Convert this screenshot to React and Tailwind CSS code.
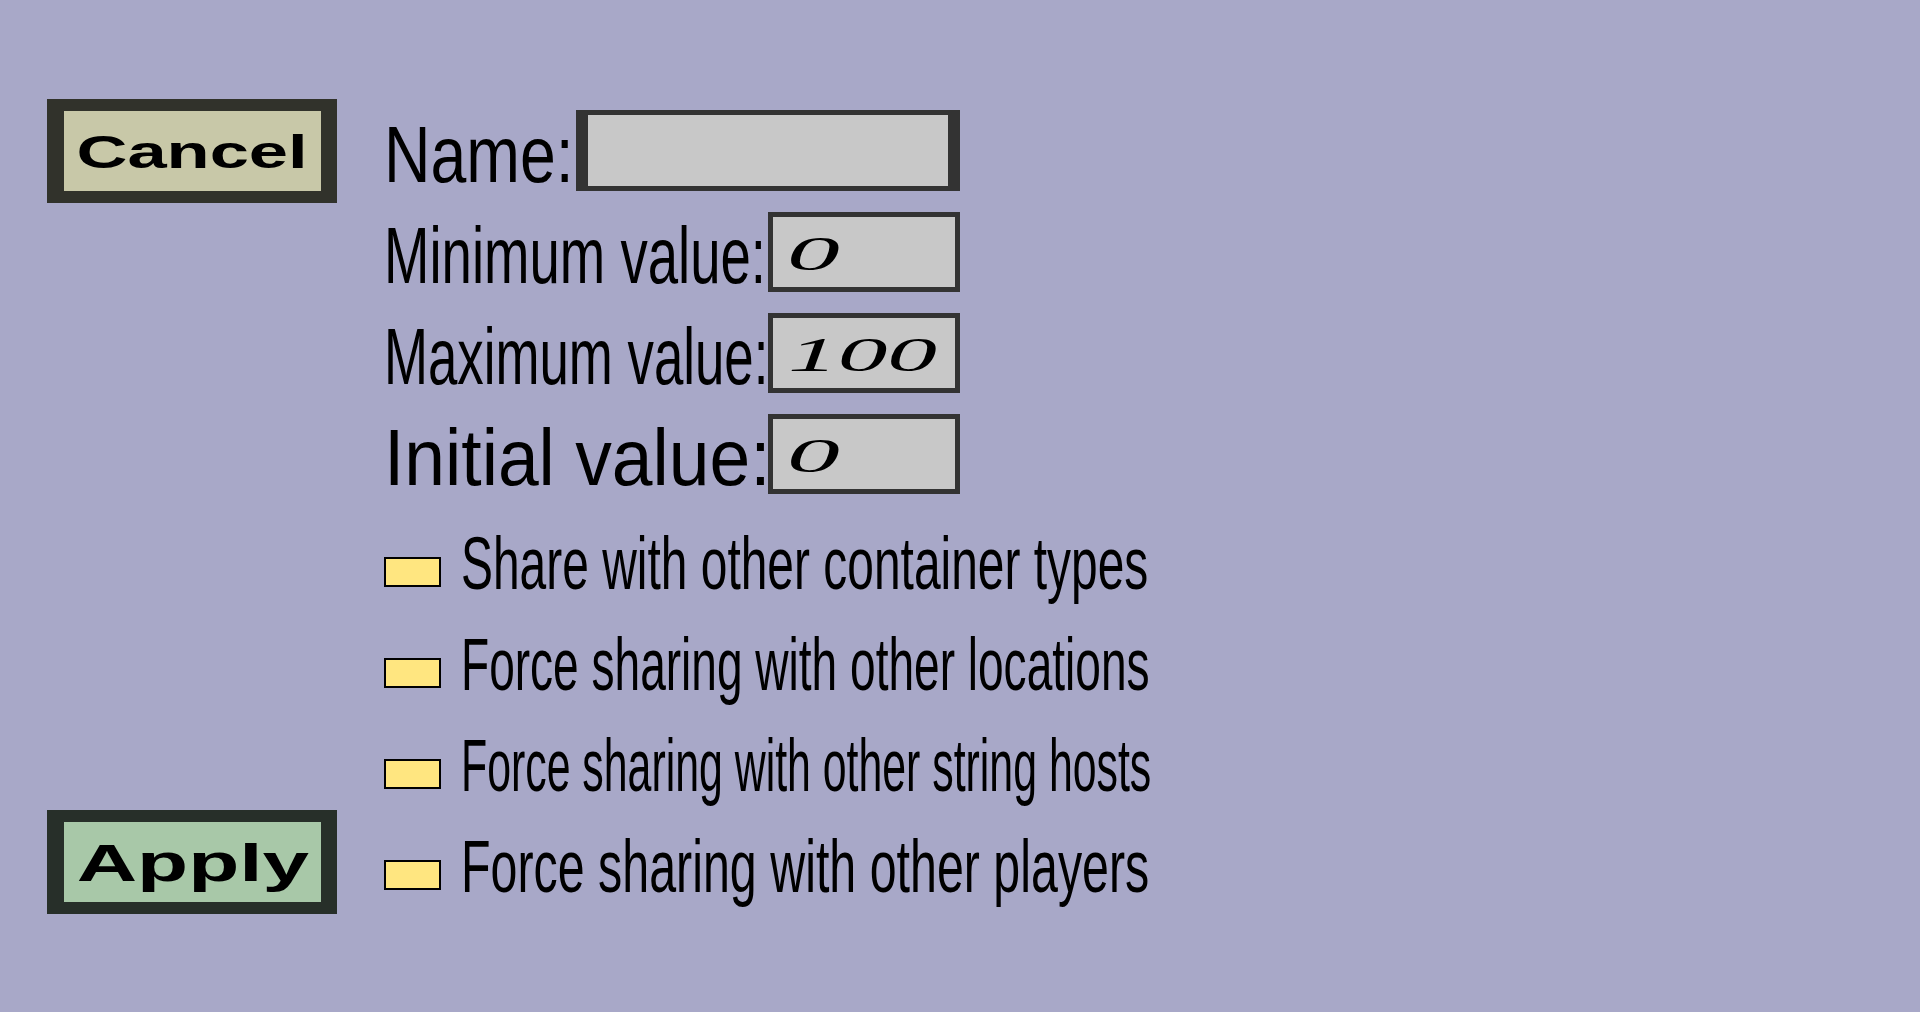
export default function App() {
  const sans = "font-['Liberation_Sans',Arial,sans-serif]";
  const serif = "font-['Liberation_Serif','Times_New_Roman',serif]";
  return (
    <div className={`min-h-screen w-full bg-[#a8a8c8] text-black ${sans} flex items-start pl-[47px] pt-[99px] overflow-hidden`}>
      <div className="flex flex-col justify-between w-[290px] h-[815px] shrink-0">
        <div className="w-[290px] h-[104px] border-l-[17px] border-r-[16px] border-y-[12px] border-[#31322b] bg-[#c8c8a8] flex items-center justify-center">
          <span className="text-[47px] leading-none font-bold scale-x-[1.5] mt-[1px] whitespace-nowrap">Cancel</span>
        </div>
        <div className="w-[290px] h-[104px] border-l-[17px] border-r-[16px] border-y-[12px] border-[#272f29] bg-[#a8c8a8] flex items-center justify-center">
          <span className="text-[51px] leading-none font-bold scale-x-[1.64] mt-[3px] whitespace-nowrap">Apply</span>
        </div>
      </div>

      <div className="ml-[45px] mt-[1px] flex flex-col">
        <div className="h-[101px] flex items-center">
          <div className="w-[194px] shrink-0 mt-[8px] pl-[2px]">
            <span className="block text-[80px] leading-none whitespace-nowrap origin-left scale-x-[0.805]">Name:</span>
          </div>
          <div className="w-[384px] h-[81px] border-x-[12px] border-y-[5px] border-[#333333] bg-[#c8c8c8]"></div>
        </div>

        <div className="h-[101px] flex items-center">
          <div className="w-[386px] shrink-0 mt-[8px] pl-[2px]">
            <span className="block text-[80px] leading-none whitespace-nowrap origin-left scale-x-[0.682]">Minimum value:</span>
          </div>
          <div className="w-[192px] h-[80px] border-[5px] border-[#333333] bg-[#c8c8c8] flex items-center pl-[14px]">
            <span className={`${serif} italic text-[48px] leading-none origin-left scale-x-[2.2] mt-[5px]`}>0</span>
          </div>
        </div>

        <div className="h-[101px] flex items-center">
          <div className="w-[386px] shrink-0 mt-[8px] pl-[2px]">
            <span className="block text-[80px] leading-none whitespace-nowrap origin-left scale-x-[0.66]">Maximum value:</span>
          </div>
          <div className="w-[192px] h-[80px] border-[5px] border-[#333333] bg-[#c8c8c8] flex items-center pl-[15px]">
            <span className={`${serif} italic text-[48px] leading-none origin-left scale-x-[2.07] mt-[5px]`}>100</span>
          </div>
        </div>

        <div className="h-[101px] flex items-center">
          <div className="w-[386px] shrink-0 mt-[8px] pl-[2px]">
            <span className="block text-[80px] leading-none whitespace-nowrap origin-left scale-x-[0.915]">Initial value:</span>
          </div>
          <div className="w-[192px] h-[80px] border-[5px] border-[#333333] bg-[#c8c8c8] flex items-center pl-[14px]">
            <span className={`${serif} italic text-[48px] leading-none origin-left scale-x-[2.2] mt-[5px]`}>0</span>
          </div>
        </div>

        <div className="mt-[17px] flex flex-col">
          {[
            ["Share with other container types", "scale-x-[0.639]"],
            ["Force sharing with other locations", "scale-x-[0.614]"],
            ["Force sharing with other string hosts", "scale-x-[0.571]"],
            ["Force sharing with other players", "scale-x-[0.645]"],
          ].map(([t, s]) => (
            <div key={t} className="h-[101px] flex items-center">
              <div className="ml-[2px] w-[57px] h-[30px] border-2 border-black bg-[#ffe680] shrink-0"></div>
              <div className="ml-[20px] w-[700px] mb-[17px]">
                <span className={`block text-[75px] leading-none whitespace-nowrap origin-left ${s}`}>{t}</span>
              </div>
            </div>
          ))}
        </div>
      </div>
    </div>
  );
}
